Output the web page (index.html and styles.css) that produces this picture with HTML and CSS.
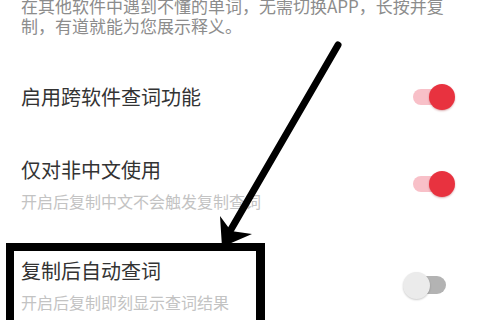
FILE: index.html
```html
<!DOCTYPE html>
<html lang="zh-CN">
<head>
    <meta charset="UTF-8">
    <meta name="viewport" content="width=device-width, initial-scale=1.0">
    <title>取词设置</title>
    <link rel="stylesheet" href="styles.css">
</head>
<body>
    <main class="page">
        <p class="intro">在其他软件中遇到不懂的单词，无需切换APP，长按并复制，有道就能为您展示释义。</p>

        <section class="settings">
            <div class="setting">
                <div class="setting-text">
                    <div class="title">启用跨软件查词功能</div>
                </div>
                <span class="toggle on"><span class="track"></span><span class="thumb"></span></span>
            </div>
            <div class="setting">
                <div class="setting-text">
                    <div class="title">仅对非中文使用</div>
                    <div class="desc">开启后复制中文不会触发复制查词</div>
                </div>
                <span class="toggle on"><span class="track"></span><span class="thumb"></span></span>
            </div>
            <div class="setting">
                <div class="setting-text">
                    <div class="title">复制后自动查词</div>
                    <div class="desc">开启后复制即刻显示查词结果</div>
                </div>
                <span class="toggle off"><span class="track"></span><span class="thumb"></span></span>
            </div>
        </section>

        <!-- annotation drawn over the screenshot -->
        <div class="mark-box"></div>
        <svg class="mark-arrow" width="480" height="320" viewBox="0 0 480 320">
            <line x1="338" y1="45" x2="226" y2="238" stroke="#000" stroke-width="7" stroke-linecap="round"/>
            <polygon points="222,247 220,216 231,231 252,234" fill="#000"/>
        </svg>
    </main>
</body>
</html>
```

FILE: styles.css
```css
body {
    margin: 0;
    background: #fff;
    font-family: "Noto Sans CJK SC", "Noto Sans", sans-serif;
    overflow: hidden;
}
.page {
    position: relative;
    width: 480px;
    height: 320px;
    overflow: hidden;
}
.intro {
    margin: -4px 0 0;
    padding: 0 24px 0 21px;
    font-size: 17px;
    line-height: 20px;
    color: #8c8c8c;
}
.settings {
    display: flex;
    flex-direction: column;
    gap: 45px;
    margin-top: 47px;
}
.setting {
    display: flex;
    align-items: center;
    justify-content: space-between;
    padding: 0 25px 0 21px;
}
.title {
    font-size: 20px;
    line-height: 28px;
    color: #333;
}
.desc {
    margin-top: 6px;
    font-size: 16px;
    line-height: 22px;
    color: #c3c3c3;
}
.toggle {
    position: relative;
    display: block;
    width: 42px;
    height: 26px;
    flex-shrink: 0;
}
.toggle .track {
    position: absolute;
    top: 5px;
    height: 16px;
    border-radius: 8px;
}
.toggle .thumb {
    position: absolute;
    top: 0;
    width: 26px;
    height: 26px;
    border-radius: 50%;
}
.toggle.on .track {
    left: 0;
    width: 36px;
    background: #f8c0c8;
}
.toggle.on .thumb {
    right: 0;
    background: #e8323f;
    box-shadow: 0 1px 2px rgba(150, 20, 30, 0.35);
}
.toggle.off {
    width: 43px;
    margin-right: 9px;
}
.toggle.off .track {
    right: 0;
    top: 4px;
    width: 36px;
    height: 18px;
    border-radius: 9px;
    background: #b3b3b3;
}
.toggle.off .thumb {
    left: 0;
    width: 27px;
    height: 27px;
    background: #ebebeb;
    box-shadow: 0 1px 2px rgba(0, 0, 0, 0.2);
}
.mark-box {
    position: absolute;
    left: 6px;
    top: 243px;
    width: 242px;
    height: 100px;
    border: 8px solid #000;
    border-right-width: 9px;
}
.mark-arrow {
    position: absolute;
    left: 0;
    top: 0;
}
```
